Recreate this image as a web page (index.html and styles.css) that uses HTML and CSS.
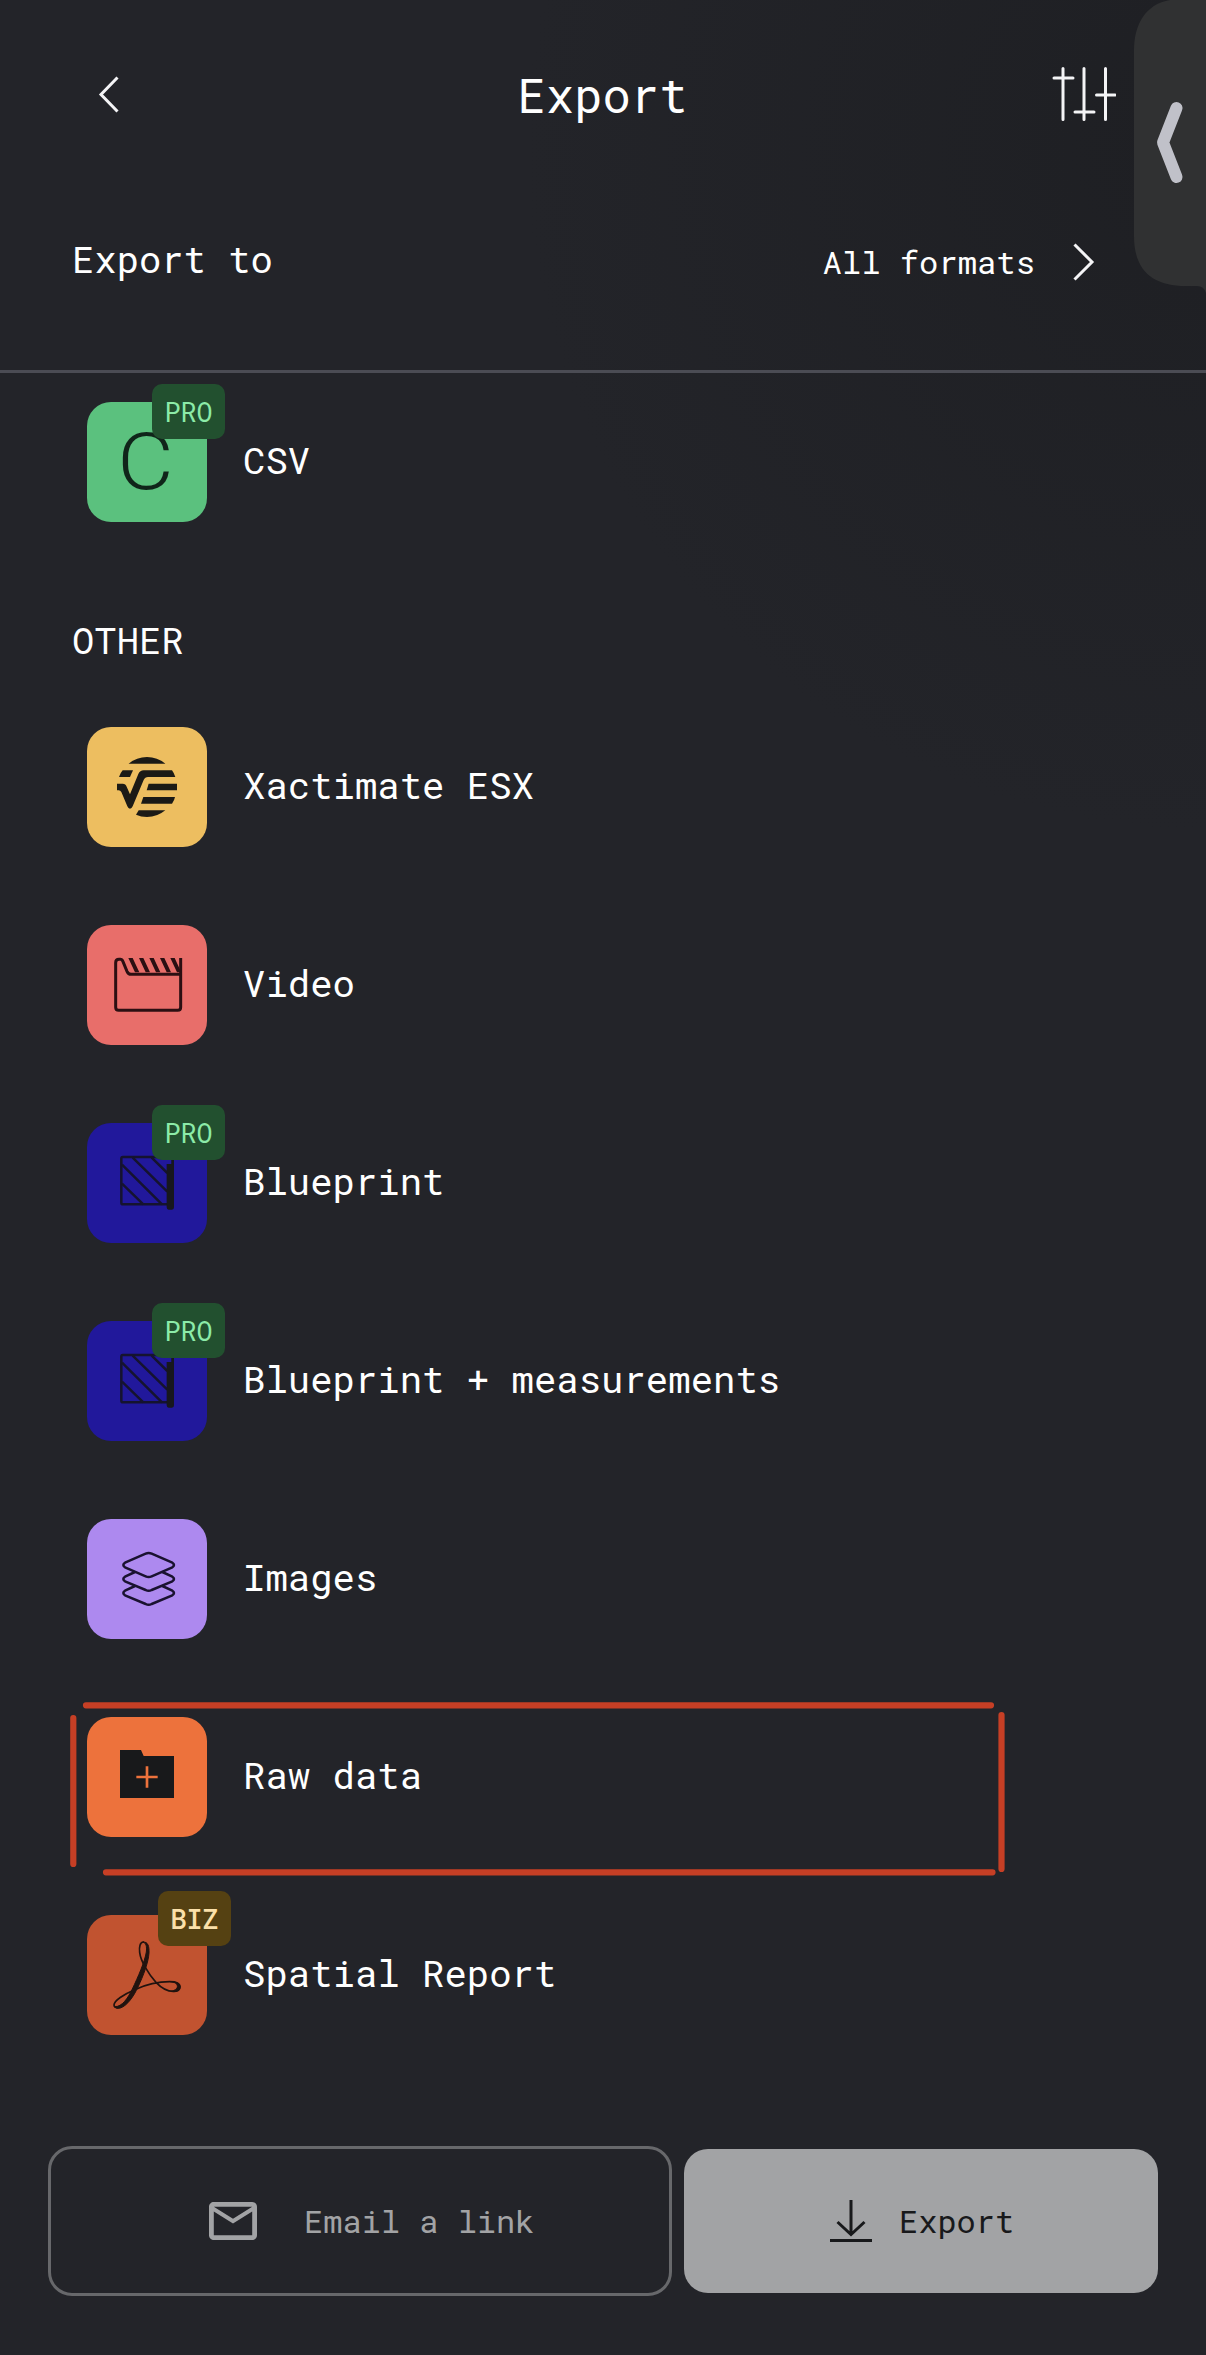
FILE: index.html
```html
<!DOCTYPE html>
<html lang="en">
<head>
<meta charset="utf-8">
<title>Export</title>
<link rel="stylesheet" href="styles.css">
</head>
<body>
<main class="screen">
  <header class="header">
    <svg class="back" width="24" height="40" viewBox="0 0 24 40"><path d="M21.500 2.500L5 19.500L21.500 36.500"/></svg>
    <h1 class="title">Export</h1>
    <svg class="sliders" width="64" height="56" viewBox="0 0 64 56"><path d="M11 1.500V52.500M32 1.500V52.500M53.500 1.500V52.500M2 11H21M23 45H42M44.500 28H63"/></svg>
  </header>

  <div class="filter">
    <span class="filter-label">Export to</span>
    <span class="filter-value">All formats</span>
    <svg class="next" width="24" height="40" viewBox="0 0 24 40"><path d="M2.500 2.500L20 20L2.500 37.500"/></svg>
  </div>

  <div class="list">
    <div class="row">
      <div class="tile green"><span class="letter">C</span><span class="badge pro">PRO</span></div>
      <span class="label">CSV</span>
    </div>

    <h2 class="section">OTHER</h2>

    <div class="rows">
      <div class="row">
        <div class="tile yellow">
          <svg viewBox="81 81 360 360" fill="#1b1a16">
            <path d="M206 191Q230 171 261 171T316 191Z"/>
            <path d="M188 211H219L210 231H177Q181 219 188 211Z"/>
            <path d="M171 251H188Q197 251 200 260L210 283L235 222Q240 211 251 211H336Q342 219 346 231H264Q255 231 251 240L218 319Q215 326 210 326Q205 326 202 319L184 276Q181 271 176 271H171Z"/>
            <path d="M266 251H351V271H260Z"/>
            <path d="M250 291H345Q343 302 336 311H243Z"/>
            <path d="M236 331H316Q292 351 261 351Q243 351 228 344Z"/>
          </svg>
        </div>
        <span class="label">Xactimate ESX</span>
      </div>
      <div class="row">
        <div class="tile red">
          <svg viewBox="81 675 360 360" fill="none" stroke="#2b0f12" stroke-width="9">
            <path d="M362 774V922Q362 931 353 931H176Q167 931 167 922V788Q167 778 177 778H181Q186 778 189 785L201 814Q205 823 213 823H362"/>
            <path stroke="none" fill="#2b0f12" d="M205 774H218L238 817H225ZM237 774H250L270 817H257ZM268 774H281L301 817H288ZM300 774H313L333 817H320ZM331 774H344L363 815V817H351Z"/>
          </svg>
        </div>
        <span class="label">Video</span>
      </div>
      <div class="row">
        <div class="tile blue">
          <svg viewBox="81 99 360 360" fill="none" stroke="#15132f" stroke-width="7.500">
            <path d="M338 222V201H188Q184 201 184 206V338Q184 343 189 343H325"/>
            <path d="M186 281L250 343M186 224L306 343M218 203L322 305M275 203L322 249"/>
            <path fill="#17171d" stroke="none" d="M320 222H342V352Q342 359 336 359H326Q320 359 320 352ZM335 200H342V225H335Z"/>
          </svg>
          <span class="badge pro">PRO</span>
        </div>
        <span class="label">Blueprint</span>
      </div>
      <div class="row">
        <div class="tile blue">
          <svg viewBox="81 99 360 360" fill="none" stroke="#15132f" stroke-width="7.500">
            <path d="M338 222V201H188Q184 201 184 206V338Q184 343 189 343H325"/>
            <path d="M186 281L250 343M186 224L306 343M218 203L322 305M275 203L322 249"/>
            <path fill="#17171d" stroke="none" d="M320 222H342V352Q342 359 336 359H326Q320 359 320 352ZM335 200H342V225H335Z"/>
          </svg>
          <span class="badge pro">PRO</span>
        </div>
        <span class="label">Blueprint + measurements</span>
      </div>
      <div class="row">
        <div class="tile purple">
          <svg viewBox="81 87 360 360" fill="none" stroke="#1a1230" stroke-width="7.500" stroke-linejoin="round">
            <path d="M257 191Q266 187 275 191L337 218Q347 225 337 232L275 259Q266 263 257 259L195 232Q185 225 195 218Z"/>
            <path d="M225 246L195 260Q185 267 195 274L257 300Q266 305 275 300L337 274Q347 267 337 260L307 246"/>
            <path d="M225 288L195 302Q185 309 195 316L257 342Q266 347 275 342L337 316Q347 309 337 302L307 288"/>
          </svg>
        </div>
        <span class="label">Images</span>
      </div>
      <div class="row">
        <div class="tile orange">
          <svg viewBox="81 681 360 360">
            <path fill="#18191b" d="M180 780H243L251 798H342V924H180Z"/>
            <path fill="none" stroke="#ed723c" stroke-width="8" d="M229 861H293M261 829V893"/>
          </svg>
        </div>
        <span class="label">Raw data</span>
        <svg class="marker" width="940" height="180" viewBox="0 0 940 180"><path d="M21 8.300H926M8.300 21V167M41 175.300H927.500M936.500 18V172"/></svg>
      </div>
      <div class="row">
        <div class="tile rust">
          <svg viewBox="21 105 360 360" fill="none" stroke="#21130f" stroke-linecap="round" stroke-linejoin="round">
            <path stroke-width="5" d="M190 186C180 186 177 201 179 217C182 244 206 283 228 307C244 324 263 334 280 334C292 334 300 329 300 320C299 309 287 305 269 305C238 305 195 315 164 329C131 343 102 362 102 375C102 381 107 383 114 383"/>
            <path fill="#21130f" stroke-width="3" d="M190 186C204 185 208 199 207 219C205 248 190 287 174 321C161 349 142 377 121 384C112 386 106 385 105 380C126 380 143 356 157 327C174 291 194 246 199 216C201 199 198 189 190 186Z"/>
            <path fill="#21130f" stroke-width="2" d="M272 305C293 305 301 311 301 321C300 332 290 337 273 334C285 331 292 326 292 319C291 311 285 307 272 305Z"/>
          </svg>
          <span class="badge biz">BIZ</span>
        </div>
        <span class="label">Spatial Report</span>
      </div>
    </div>
  </div>

  <footer class="footer">
    <div class="button email">
      <svg width="48" height="38" viewBox="2 4 20 16" preserveAspectRatio="none" fill="#a2a3a5"><path d="M22 6c0-1.100-.9-2-2-2H4c-1.100 0-2 .9-2 2v12c0 1.100.9 2 2 2h16c1.100 0 2-.9 2-2V6zm-2 0l-8 5-8-5h16zm0 12H4V8l8 5 8-5v10z"/></svg>
      <span>Email a link</span>
    </div>
    <div class="button export">
      <svg width="42" height="44" viewBox="0 0 42 44" fill="none" stroke="#18191b" stroke-width="3"><path d="M21 1V36M7.500 23L21 35.500L34.500 23M0 41.500H42"/></svg>
      <span>Export</span>
    </div>
  </footer>

  <svg class="edge-panel" width="72" height="294" viewBox="0 0 72 294">
    <path fill="#303132" d="M72 0H36C12 4 0 24 0 50V236C0 270 18 286 52 286H63Q70 286 72 293Z"/>
    <path fill="none" stroke="#c0c1c9" stroke-width="12" stroke-linecap="round" stroke-linejoin="round" d="M42.500 108L29 142.500L42.500 177"/>
  </svg>
</main>
</body>
</html>
```
FILE: styles.css
```css
* { box-sizing: border-box; }

body {
  margin: 0;
  background: #232429;
  color: #fff;
  font-family: "Roboto Mono", "Liberation Mono", monospace;
}

.screen {
  position: relative;
  width: 1206px;
  height: 2355px;
  overflow: hidden;
  background: radial-gradient(circle 680px at 1206px 150px, #1e1f23, #232429);
}

svg { display: block; flex: none; }

.header {
  display: flex;
  align-items: center;
  justify-content: space-between;
  height: 189px;
  padding: 0 90px 0 96px;
}

.title {
  margin: 0 0 0 33px;
  font-size: 47.2px;
  font-weight: 400;
  line-height: 60px;
}

.back, .sliders, .next {
  fill: none;
  stroke: #f4f4f6;
  stroke-width: 3;
}

.sliders { stroke-linecap: round; }

.filter {
  display: flex;
  align-items: center;
  height: 184px;
  padding: 0 110px 39px 72px;
  border-bottom: 3px solid #4b4c54;
}

.filter-label {
  flex: 1;
  padding-bottom: 3px;
  font-size: 37.2px;
  line-height: 48px;
}

.filter-value {
  margin-right: 37px;
  padding-top: 3px;
  font-size: 32.2px;
  line-height: 42px;
}

.next { position: relative; top: 2px; }

.list { padding: 29px 0 0 87px; }

.rows {
  display: flex;
  flex-direction: column;
  gap: 78px;
}

.row {
  position: relative;
  display: flex;
  align-items: center;
  gap: 36px;
  height: 120px;
}

.section {
  height: 205px;
  margin: 0 0 0 -15px;
  padding-top: 93px;
  font-size: 37.2px;
  font-weight: 400;
  line-height: 49px;
}

.label {
  padding-bottom: 5px;
  font-size: 37.3px;
  line-height: 48px;
  white-space: nowrap;
}

.tile {
  position: relative;
  flex: none;
  width: 120px;
  height: 120px;
  border-radius: 24px;
}

.green { background: #5bc17e; }
.yellow { background: #edbe60; }
.red { background: #e86e6a; }
.blue { background: #21189b; }
.purple { background: #ad89ef; }
.orange { background: #ed723c; }
.rust { background: #c15330; }

.letter {
  display: block;
  color: #10251a;
  font-family: Roboto, sans-serif;
  font-size: 79px;
  font-weight: 300;
  line-height: 121px;
  text-align: center;
  transform: translateX(-1.500px) scaleX(1.1);
}

.badge {
  position: absolute;
  left: 65px;
  top: -18px;
  width: 73px;
  height: 55px;
  border-radius: 10px;
  font-size: 26.8px;
  line-height: 55px;
  text-align: center;
}

.pro { background: #22502f; color: #8ceba8; }

.biz {
  left: 71px;
  top: -24px;
  background: #554112;
  color: #fbe0a9;
  font-weight: 500;
}

.marker {
  position: absolute;
  left: -22px;
  top: -20px;
  fill: none;
  stroke: #c63f25;
  stroke-width: 6.200;
  stroke-linecap: round;
}

.footer {
  display: flex;
  align-items: center;
  gap: 12px;
  padding: 111px 48px 0;
}

.button {
  display: flex;
  align-items: center;
  border-radius: 24px;
  font-size: 32px;
  line-height: 42px;
}

.email {
  width: 624px;
  height: 150px;
  padding-left: 158px;
  gap: 47px;
  border: 3px solid #67686b;
  color: #a2a3a5;
}

.export {
  width: 474px;
  height: 144px;
  padding-left: 146px;
  gap: 27px;
  background: #a2a3a5;
  color: #18191b;
}

.edge-panel {
  position: absolute;
  top: 0;
  right: 0;
}
```
